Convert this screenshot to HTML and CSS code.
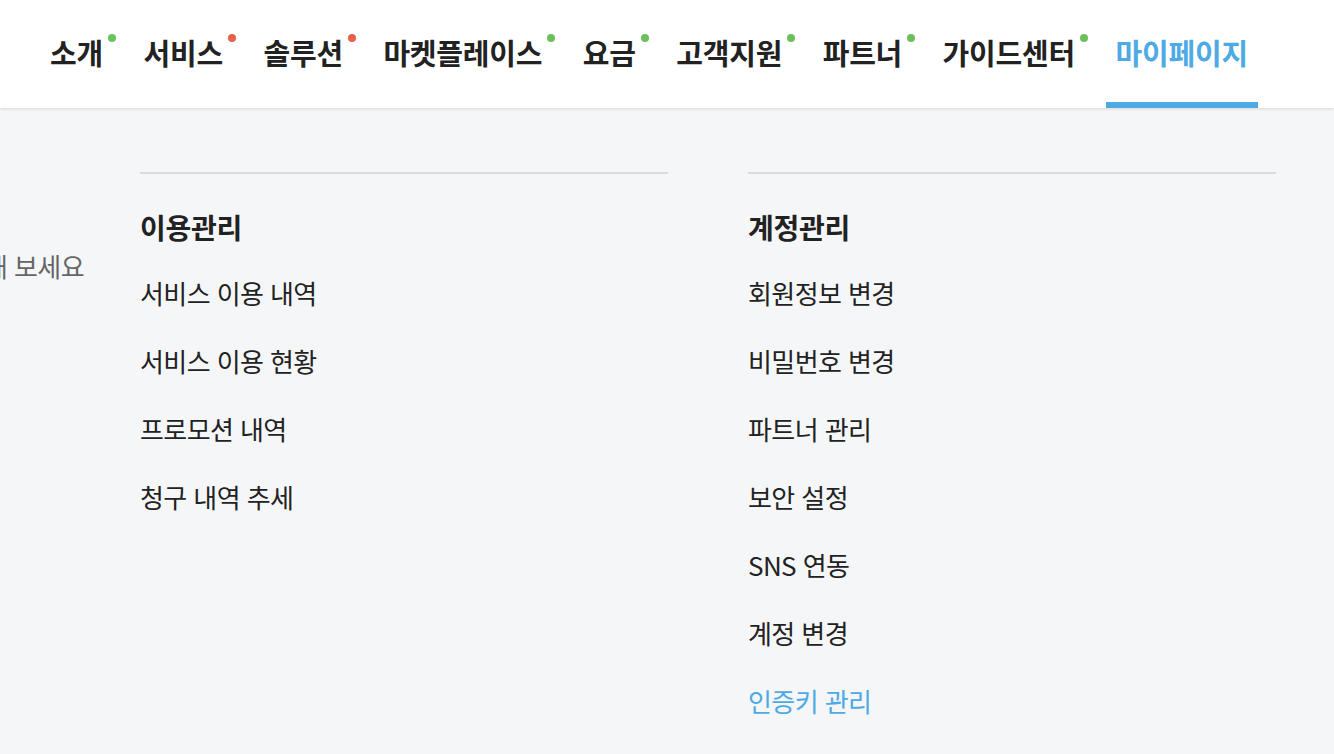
FILE: index.html
```html
<!DOCTYPE html>
<html lang="ko">
<head>
  <meta charset="UTF-8">
  <title>마이페이지</title>
  <link rel="stylesheet" href="styles.css">
</head>
<body>
  <header class="gnb">
    <nav class="gnb-menu">
      <a class="gnb-item dot-green" href="#">소개</a>
      <a class="gnb-item dot-red" href="#">서비스</a>
      <a class="gnb-item dot-red" href="#">솔루션</a>
      <a class="gnb-item dot-green" href="#">마켓플레이스</a>
      <a class="gnb-item dot-green" href="#">요금</a>
      <a class="gnb-item dot-green" href="#">고객지원</a>
      <a class="gnb-item dot-green" href="#">파트너</a>
      <a class="gnb-item dot-green" href="#">가이드센터</a>
      <a class="gnb-item active" href="#">마이페이지</a>
    </nav>
  </header>

  <section class="submenu">
    <div class="submenu-intro">
      <p>마이페이지에서 서비스를 관리해 보세요</p>
    </div>

    <div class="submenu-col">
      <h3>이용관리</h3>
      <ul>
        <li><a href="#">서비스 이용 내역</a></li>
        <li><a href="#">서비스 이용 현황</a></li>
        <li><a href="#">프로모션 내역</a></li>
        <li><a href="#">청구 내역 추세</a></li>
      </ul>
    </div>

    <div class="submenu-col">
      <h3>계정관리</h3>
      <ul>
        <li><a href="#">회원정보 변경</a></li>
        <li><a href="#">비밀번호 변경</a></li>
        <li><a href="#">파트너 관리</a></li>
        <li><a href="#">보안 설정</a></li>
        <li><a href="#">SNS 연동</a></li>
        <li><a href="#">계정 변경</a></li>
        <li><a class="current" href="#">인증키 관리</a></li>
      </ul>
    </div>
  </section>
</body>
</html>
```

FILE: styles.css
```css
body {
  margin: 0;
  font-family: "Noto Sans CJK KR", "Noto Sans", sans-serif;
  color: #222;
  background-color: #f5f6f8;
  height: 754px;
  overflow: hidden;
}

a {
  color: inherit;
  text-decoration: none;
}

.gnb {
  height: 108px;
  background: white;
  box-shadow: 0 1px 3px rgba(0,0,0,0.12);
  position: relative;
  z-index: 1;
}

.gnb-menu {
  display: flex;
  gap: 20.5px;
  height: 100%;
  padding-left: 40px;
}

.gnb-item {
  position: relative;
  display: flex;
  align-items: center;
  height: 100%;
  padding: 0 10px 4px;
  box-sizing: border-box;
  font-size: 29px;
  font-weight: 700;
  letter-spacing: -0.2px;
}

.gnb-item.dot-green::after,
.gnb-item.dot-red::after {
  content: "";
  position: absolute;
  top: 34px;
  right: -3px;
  width: 8px;
  height: 8px;
  border-radius: 50%;
}

.gnb-item.dot-green::after {
  background: #6cc05b;
}

.gnb-item.dot-red::after {
  background: #e8604c;
}

.gnb-item.active {
  color: #4eaae4;
  border-bottom: 6px solid #4eaae4;
  padding-bottom: 0;
  padding-top: 2px;
}

.submenu {
  display: flex;
  padding-top: 64px;
}

.submenu-intro {
  flex: 0 0 84px;
  margin-right: 56px;
  display: flex;
  justify-content: flex-end;
  overflow: hidden;
  padding-top: 76px;
}

.submenu-intro p {
  margin: 0;
  white-space: nowrap;
  font-size: 26px;
  letter-spacing: -0.6px;
  color: #666;
  line-height: 36px;
}

.submenu-col {
  flex: 0 0 528px;
  margin-right: 80px;
  border-top: 2px solid #d9dadd;
  padding-top: 35px;
}

.submenu-col:last-child {
  margin-right: 0;
}

.submenu-col h3 {
  margin: 0 0 14px;
  font-size: 28px;
  font-weight: 700;
  letter-spacing: -0.3px;
  line-height: 36px;
}

.submenu-col ul {
  list-style: none;
  margin: 0;
  padding: 0;
}

.submenu-col li {
  height: 68px;
  line-height: 68px;
  font-size: 26px;
  letter-spacing: -0.6px;
}

.submenu-col a.current {
  color: #4eaae4;
}
```
